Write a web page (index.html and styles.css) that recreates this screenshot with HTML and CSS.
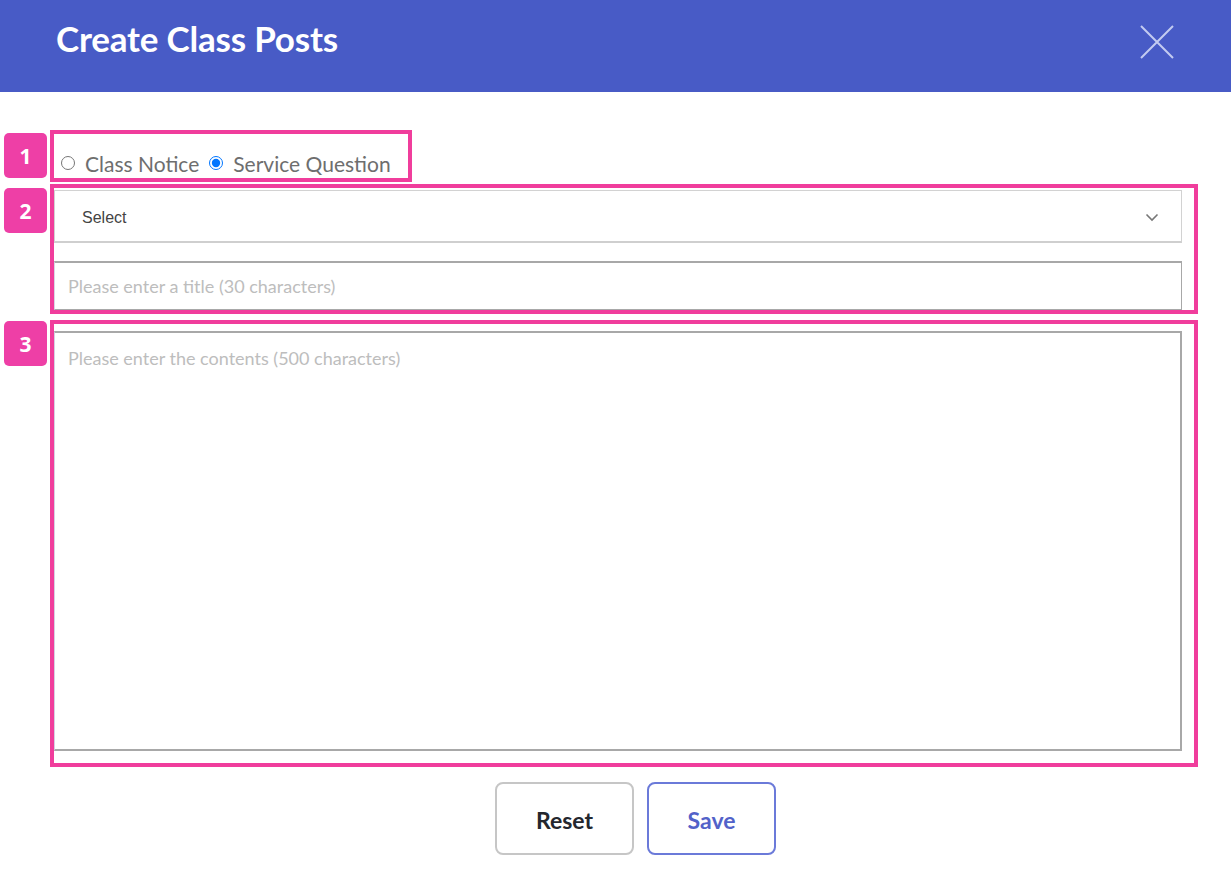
FILE: index.html
```html
<!DOCTYPE html>
<html lang="en">
<head>
<meta charset="utf-8">
<title>Create Class Posts</title>
<link rel="stylesheet" href="styles.css">
</head>
<body>
<header class="top">
  <h1 class="top-title">Create Class Posts</h1>
  <button class="close" type="button" aria-label="Close">
    <svg width="34" height="34" viewBox="0 0 34 34"><path d="M1 1 L33 33 M33 1 L1 33" stroke="#c3cbf1" stroke-width="2" fill="none"/></svg>
  </button>
</header>
<main class="form">
  <div class="row">
    <span class="badge">1</span>
    <div class="frame frame-type">
      <label class="opt"><input type="radio" name="kind">Class Notice</label>
      <label class="opt"><input type="radio" name="kind" checked>Service Question</label>
    </div>
  </div>
  <div class="row">
    <span class="badge b2">2</span>
    <div class="frame frame-fields">
      <div class="select">
        <span>Select</span>
        <svg width="14" height="9" viewBox="0 0 14 9"><path d="M1.5 1.5 L7 7 L12.5 1.5" stroke="#777" stroke-width="1.6" fill="none"/></svg>
      </div>
      <input class="title" type="text" placeholder="Please enter a title (30 characters)">
    </div>
  </div>
  <div class="row row-body">
    <span class="badge b3">3</span>
    <div class="frame frame-body">
      <textarea class="contents" placeholder="Please enter the contents (500 characters)"></textarea>
    </div>
  </div>
  <div class="actions">
    <button class="btn btn-reset" type="button">Reset</button>
    <button class="btn btn-save" type="button">Save</button>
  </div>
</main>
</body>
</html>
```
FILE: styles.css
```css
* { box-sizing: border-box; }
html, body { margin: 0; padding: 0; background: #fff; }
body { font-family: "Lato", "Liberation Sans", sans-serif; width: 1231px; height: 871px; overflow: hidden; }

.top {
  height: 92px;
  background: #485bc6;
  display: flex;
  align-items: center;
  justify-content: space-between;
  padding: 0 57px 0 56px;
}
.top-title {
  margin: 0;
  color: #fff;
  font-family: "Lato", sans-serif;
  font-weight: 700;
  font-size: 35px;
  line-height: 42px;
  letter-spacing: -0.2px;
  padding-bottom: 16px;
}
.close {
  background: none;
  border: 0;
  padding: 0;
  width: 34px;
  height: 34px;
  display: flex;
  margin-bottom: 8px;
}

.form {
  padding-top: 38px;
}
.row {
  display: flex;
  align-items: flex-start;
  gap: 3px;
  padding-left: 4px;
  margin-bottom: 2px;
}
.row-body { margin-top: 6px; }
.badge {
  width: 43px;
  height: 45px;
  margin-top: 3px;
  background: #ee3fa6;
  color: #fff;
  border-radius: 5px;
  display: flex;
  align-items: center;
  justify-content: center;
  font-family: "Open Sans", sans-serif;
  font-weight: 700;
  font-size: 21px;
}
.b2 { margin-top: 4px; }
.b3 { margin-top: 1px; }

.frame {
  border: 4px solid #f03d9c;
}
.frame-type {
  width: 362px;
  height: 52px;
  display: flex;
  align-items: center;
  padding: 14px 0 0 7px;
  gap: 10px;
}
.opt {
  display: flex;
  align-items: center;
  color: #6e6e6e;
  font-size: 21px;
  white-space: pre;
}
.opt input {
  margin: 0 10px 0 0;
  width: 14px;
  height: 14px;
}

.frame-fields {
  width: 1148px;
  height: 130px;
  padding-top: 2px;
}
.select {
  width: 1128px;
  height: 53px;
  border: 1px solid #d2d2d2;
  border-bottom: 2px solid #cfcfcf;
  display: flex;
  align-items: center;
  justify-content: space-between;
  padding: 3px 22px 0 27px;
  font-family: "Liberation Sans", Arial, sans-serif;
  font-size: 16px;
  color: #444;
}
.title {
  display: block;
  width: 1128px;
  height: 49px;
  margin-top: 18px;
  border: 1px solid #a8a8a8;
  border-top-width: 2px;
  border-left-color: #d8d8e4;
  padding: 0 0 0 13px;
  font-family: "Lato", sans-serif;
  font-size: 18px;
  outline: none;
}
.title::placeholder { color: #bdbdbd; }

.frame-body {
  width: 1148px;
  height: 447px;
  padding-top: 7px;
}
.contents {
  display: block;
  width: 1128px;
  height: 420px;
  resize: none;
  border: 1px solid #a8a8a8;
  border-top-width: 2px;
  border-bottom-width: 2px;
  border-right-width: 2px;
  border-left-color: #d4d2e2;
  padding: 14px 13px;
  font-family: "Lato", sans-serif;
  font-size: 18px;
  outline: none;
}
.contents::placeholder { color: #bdbdbd; }

.actions {
  display: flex;
  justify-content: center;
  gap: 13px;
  padding-left: 40px;
  margin-top: 15px;
}
.btn {
  height: 73px;
  border-radius: 8px;
  background: #fff;
  font-family: "Lato", sans-serif;
  font-weight: 700;
  font-size: 23px;
  padding-top: 4px;
}
.btn-reset {
  width: 139px;
  border: 2px solid #c6c6c6;
  color: #24272e;
}
.btn-save {
  width: 129px;
  border: 2px solid #6b7ad9;
  color: #5262c9;
}
```
